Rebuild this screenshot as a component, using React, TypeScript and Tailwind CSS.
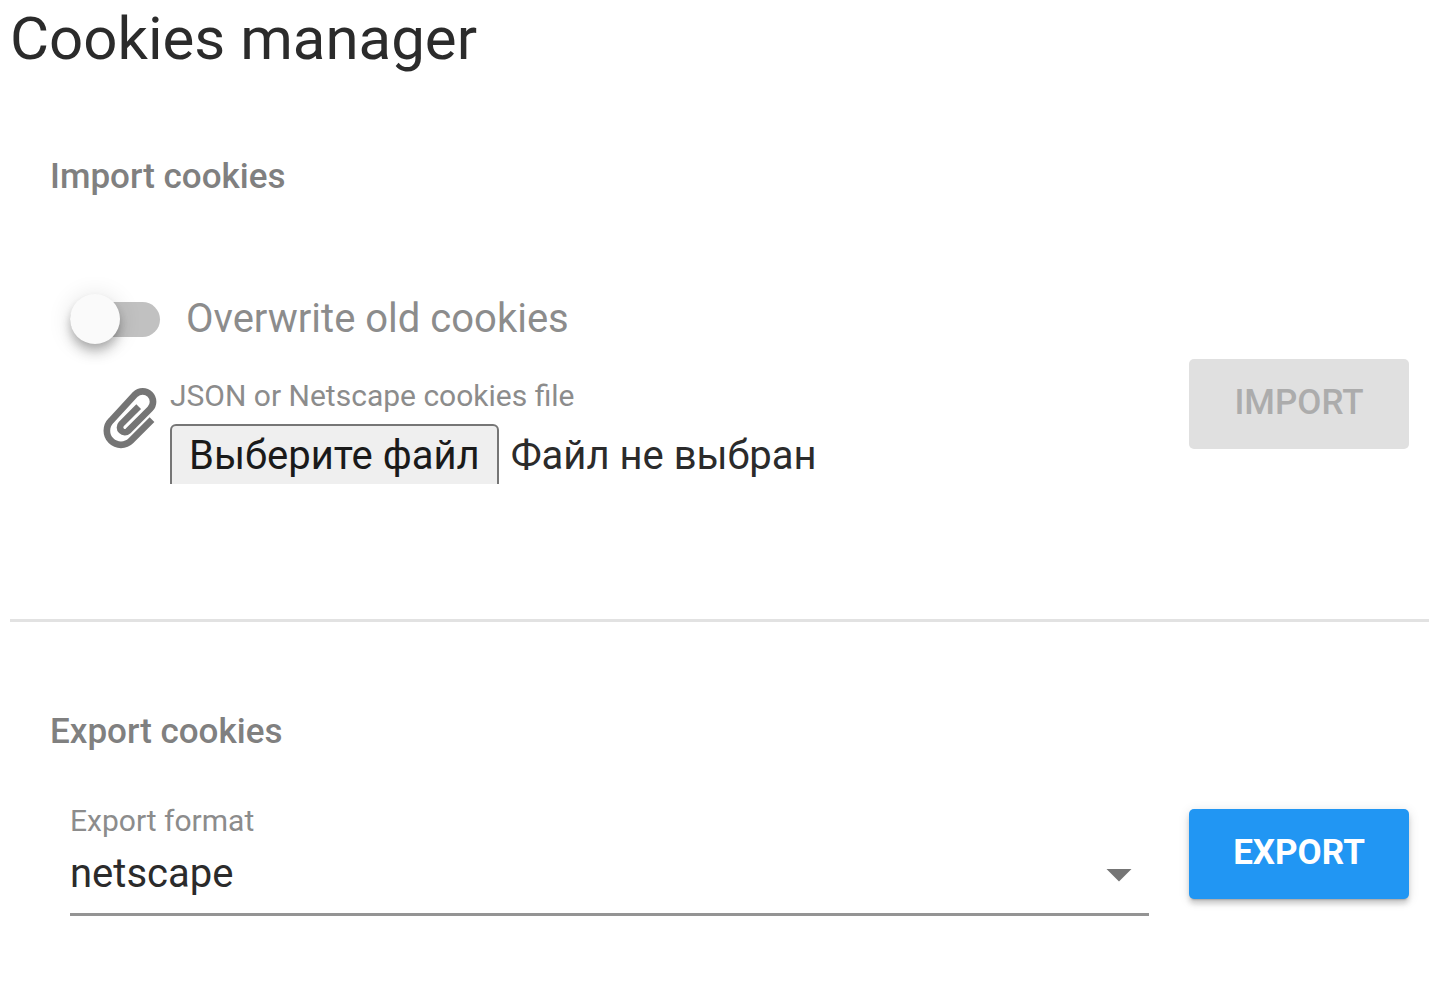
import { useRef, useState } from "react";

const BUTTON =
  "h-[90px] w-[220px] shrink-0 rounded-[5px] pb-0.5 text-[35px] leading-[40px] uppercase";

function Paperclip() {
  return (
    <svg
      viewBox="0 0 210 228"
      className="h-[76px] w-[70px] shrink-0 fill-none stroke-[#757575]"
      strokeWidth="20"
      strokeLinejoin="round"
      aria-hidden="true"
    >
      <path d="M131 83L79 135A14.500 14.500 0 0 0 99.500 155.500L165 90A31 31 0 0 0 121 46L48 125A42 42 0 0 0 108 185L171 122" />
    </svg>
  );
}

function ImportSection() {
  const [overwrite, setOverwrite] = useState(false);
  const [file, setFile] = useState<File | null>(null);
  const picker = useRef<HTMLInputElement>(null);

  return (
    <section className="px-5 pb-[135px] sm:px-10">
      <h2 className="text-[35px] leading-[40px] font-medium text-[#808080]">Import cookies</h2>
      <div className="flex items-center gap-10 pt-[92px] pl-5">
        <div className="min-w-0 flex-1">
          <label className="flex cursor-pointer items-center gap-[26px] text-[40px] leading-[60px] text-[#8c8c8c]">
            <input
              type="checkbox"
              role="switch"
              checked={overwrite}
              onChange={(e) => setOverwrite(e.target.checked)}
              className="peer sr-only"
            />
            <span className="flex h-[35px] w-[90px] shrink-0 items-center rounded-full bg-[#c1c1c1] peer-checked:justify-end peer-checked:bg-[#90caf9]">
              <span className="size-[50px] rounded-full bg-[#fafafa] shadow-[0_5px_10px_-2px_rgba(0,0,0,0.2),0_10px_12px_0_rgba(0,0,0,0.14),0_2px_25px_0_rgba(0,0,0,0.12)]" />
            </span>
            <span>Overwrite old cookies</span>
          </label>
          <div className="flex gap-[5px] pt-[30px] pl-[25px]">
            <Paperclip />
            <div className="min-w-0">
              <label htmlFor="cookies-file" className="block text-[30px] leading-[34px] text-[#8c8c8c]">
                JSON or Netscape cookies file
              </label>
              <div className="mt-[11px] flex h-[60px] items-start gap-3 overflow-hidden text-[40px] text-[#2b2b2b]">
                <button
                  type="button"
                  onClick={() => picker.current?.click()}
                  className="h-[66px] shrink-0 rounded-[6px] border-2 border-[#767676] bg-[#efefef] px-[17px] pb-0.5 leading-[58px] text-[#1a1a1a]"
                >
                  Выберите файл
                </button>
                <span className="truncate leading-[64px]">{file ? file.name : "Файл не выбран"}</span>
              </div>
              <input
                ref={picker}
                id="cookies-file"
                type="file"
                tabIndex={-1}
                onChange={(e) => setFile(e.target.files?.[0] ?? null)}
                className="sr-only"
              />
            </div>
          </div>
        </div>
        <button type="button" disabled={!file} className={`${BUTTON} mt-[35px] -mr-5 bg-[#e0e0e0] font-medium text-[#acacac]`}>
          Import
        </button>
      </div>
    </section>
  );
}

function ExportSection() {
  const [format, setFormat] = useState("netscape");

  return (
    <section className="px-5 pt-[90px] sm:px-10">
      <h2 className="text-[35px] leading-[40px] font-medium text-[#808080]">Export cookies</h2>
      <div className="flex items-start gap-10 pt-[52px] pl-5">
        <div className="min-w-0 flex-1">
          <label htmlFor="export-format" className="block text-[30px] leading-[34px] text-[#8c8c8c]">
            Export format
          </label>
          <div className="relative border-b-[3px] border-[#949494]">
            <select
              id="export-format"
              value={format}
              onChange={(e) => setFormat(e.target.value)}
              className="block h-[75px] w-full appearance-none bg-transparent pb-1 text-[40px] leading-[60px] text-[#2b2b2b] outline-none"
            >
              <option value="netscape">netscape</option>
              <option value="json">json</option>
            </select>
            <svg viewBox="0 0 24 24" className="pointer-events-none absolute top-1.5 right-0 size-[60px] fill-[#757575]" aria-hidden="true">
              <path d="M7 10l5 5 5-5z" />
            </svg>
          </div>
        </div>
        <button
          type="button"
          className={`${BUTTON} mt-[5px] -mr-5 bg-[#2196f3] font-bold text-white shadow-[0_3px_2px_-2px_rgba(0,0,0,0.2),0_5px_5px_0_rgba(0,0,0,0.14),0_2px_12px_0_rgba(0,0,0,0.12)]`}
        >
          Export
        </button>
      </div>
    </section>
  );
}

export default function App() {
  return (
    <main className="min-h-screen bg-white pr-[7px] pl-[10px] font-['Roboto',sans-serif]">
      <h1 className="pb-20 text-[60px] leading-[77px] text-[#2b2b2b]">Cookies manager</h1>
      <ImportSection />
      <hr className="border-t-[3px] border-[#e2e2e2]" />
      <ExportSection />
    </main>
  );
}
